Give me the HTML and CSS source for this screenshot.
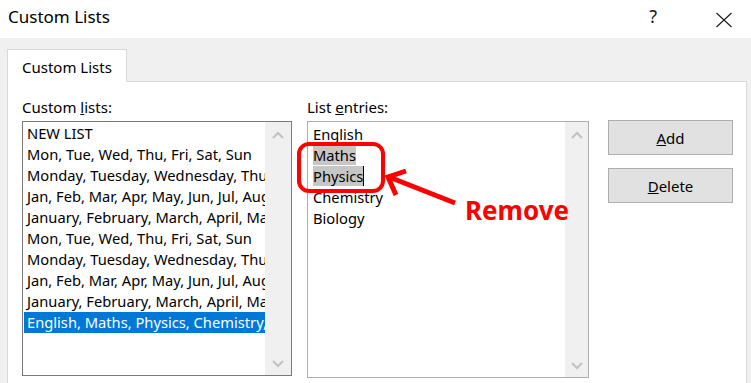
FILE: index.html
```html
<!DOCTYPE html>
<html lang="en">
<head>
    <meta charset="UTF-8">
    <title>Custom Lists</title>
    <link rel="stylesheet" href="styles.css">
</head>
<body>

    <div class="window">
        <div class="titlebar">
            <div class="title">Custom Lists</div>
            <div class="title-buttons">
                <span class="help">?</span>
                <svg class="close" width="18" height="16" viewBox="0 0 18 16">
                    <path d="M1.5 1 L16.5 15 M16.5 1 L1.5 15" stroke="#1a1a1a" stroke-width="1.1" fill="none"/>
                </svg>
            </div>
        </div>

        <div class="client">
            <div class="tabs">
                <div class="tab">Custom Lists</div>
            </div>

            <div class="panel">
                <div class="col col-lists">
                    <div class="label">Custom <u>l</u>ists:</div>
                    <div class="listbox listbox-lists">
                        <ul class="items">
                            <li>NEW LIST</li>
                            <li>Mon, Tue, Wed, Thu, Fri, Sat, Sun</li>
                            <li>Monday, Tuesday, Wednesday, Thursday, Friday, Saturday, Sunday</li>
                            <li>Jan, Feb, Mar, Apr, May, Jun, Jul, Aug, Sep, Oct, Nov, Dec</li>
                            <li>January, February, March, April, May, June, July, August</li>
                            <li>Mon, Tue, Wed, Thu, Fri, Sat, Sun</li>
                            <li>Monday, Tuesday, Wednesday, Thursday, Friday, Saturday, Sunday</li>
                            <li>Jan, Feb, Mar, Apr, May, Jun, Jul, Aug, Sep, Oct, Nov, Dec</li>
                            <li>January, February, March, April, May, June, July, August</li>
                            <li class="selected">English, Maths, Physics, Chemistry, Biology</li>
                        </ul>
                        <div class="scrollbar">
                            <svg width="12" height="8" viewBox="0 0 12 8"><path d="M1 7 L6 2 L11 7" stroke="#c2c2c2" stroke-width="2" fill="none"/></svg>
                            <svg width="12" height="8" viewBox="0 0 12 8"><path d="M1 1 L6 6 L11 1" stroke="#c2c2c2" stroke-width="2" fill="none"/></svg>
                        </div>
                    </div>
                </div>

                <div class="col col-entries">
                    <div class="label">List <u>e</u>ntries:</div>
                    <div class="listbox listbox-entries">
                        <div class="entries">
                            <div>English</div>
                            <div><span class="marked">Maths</span></div>
                            <div><span class="marked caret">Physics</span></div>
                            <div>Chemistry</div>
                            <div>Biology</div>
                        </div>
                        <div class="scrollbar">
                            <svg width="12" height="8" viewBox="0 0 12 8"><path d="M1 7 L6 2 L11 7" stroke="#c2c2c2" stroke-width="2" fill="none"/></svg>
                            <svg width="12" height="8" viewBox="0 0 12 8"><path d="M1 1 L6 6 L11 1" stroke="#c2c2c2" stroke-width="2" fill="none"/></svg>
                        </div>
                    </div>
                </div>

                <div class="buttons">
                    <button class="btn"><u>A</u>dd</button>
                    <button class="btn"><u>D</u>elete</button>
                </div>
            </div>
        </div>

        <!-- annotation drawn over the dialog -->
        <svg class="markup" width="751" height="383" viewBox="0 0 751 383">
            <rect x="299" y="144" width="84" height="47" rx="10" ry="10" stroke="#ff0000" stroke-width="4" fill="none"/>
            <path d="M455 203 L389 177" stroke="#ff0000" stroke-width="5" fill="none"/>
            <path d="M406 171 L388 177 L396 195" stroke="#ff0000" stroke-width="5" fill="none" stroke-linejoin="miter"/>
        </svg>
        <div class="markup-label">Remove</div>
    </div>

</body>
</html>
```

FILE: styles.css
```css
/* Fenêtre de dialogue façon Windows */
body {
    margin: 0;
    padding: 0;
    font-family: 'Noto Sans', 'Open Sans', sans-serif;
    color: #000;
    overflow: hidden;
}

.window {
    position: relative;
    width: 751px;
    height: 383px;
    background: #f0f0f0;
    overflow: hidden;
}

.titlebar {
    height: 38px;
    background: #fff;
    display: flex;
    justify-content: space-between;
    box-sizing: border-box;
    padding: 5px 0 0 8px;
}

.title {
    font-size: 17px;
    line-height: 24px;
}

.title-buttons {
    display: flex;
    align-items: flex-start;
    gap: 58px;
    padding-right: 18px;
}

.help {
    font-size: 18px;
    line-height: 24px;
    color: #1a1a1a;
    margin-top: -1px;
}

.close {
    margin-top: 7px;
}

.client {
    padding: 11px 4px 0 7px;
}

.tab {
    position: relative;
    z-index: 1;
    width: 120px;
    height: 33px;
    box-sizing: border-box;
    margin-bottom: -1px;
    padding: 7px 0 0 14px;
    background: #fff;
    border: 1px solid #d9d9d9;
    border-bottom: none;
    font-size: 15px;
    line-height: 20px;
}

.panel {
    display: flex;
    align-items: flex-start;
    height: 320px;
    background: #fff;
    border: 1px solid #d9d9d9;
    padding: 15px 0 0 14px;
}

.label {
    font-size: 15px;
    line-height: 20px;
    margin-bottom: 4px;
}

.col-lists {
    margin-right: 15px;
}

.col-entries {
    margin-right: 19px;
}

.listbox {
    display: flex;
    box-sizing: border-box;
    background: #fff;
    font-size: 14.7px;
    line-height: 21px;
}

.listbox-lists {
    width: 270px;
    height: 255px;
    border: 1px solid #7a7a7a;
}

.listbox-entries {
    width: 282px;
    height: 257px;
    border: 1px solid #adadad;
}

.items {
    list-style: none;
    margin: 0;
    padding: 1px 0 0;
    flex: 1;
    overflow: hidden;
}

.items li {
    white-space: nowrap;
    overflow: hidden;
    padding-left: 3px;
    margin-left: 1px;
}

.items li.selected {
    background: #0078d7;
    color: #fff;
}

.entries {
    flex: 1;
    padding: 2px 0 0 5px;
    white-space: nowrap;
}

.marked {
    background: #c6c6c6;
}

.caret {
    border-right: 1px solid #000;
}

.scrollbar {
    width: 26px;
    background: #f0f0f0;
    display: flex;
    flex-direction: column;
    justify-content: space-between;
    align-items: center;
    padding: 9px 0 7px;
    box-sizing: border-box;
}

.listbox-entries .scrollbar {
    width: 23px;
}

.buttons {
    display: flex;
    flex-direction: column;
    gap: 13px;
    margin-top: 23px;
}

.btn {
    width: 125px;
    height: 35px;
    background: #e1e1e1;
    border: 1px solid #adadad;
    font-family: 'Noto Sans', 'Open Sans', sans-serif;
    font-size: 15px;
    color: #000;
    padding: 0;
}

/* Annotation rouge */
.markup {
    position: absolute;
    left: 0;
    top: 0;
}

.markup-label {
    position: absolute;
    left: 465px;
    top: 192px;
    font-size: 26px;
    font-weight: 700;
    line-height: 36px;
    color: #ff0000;
}
```
